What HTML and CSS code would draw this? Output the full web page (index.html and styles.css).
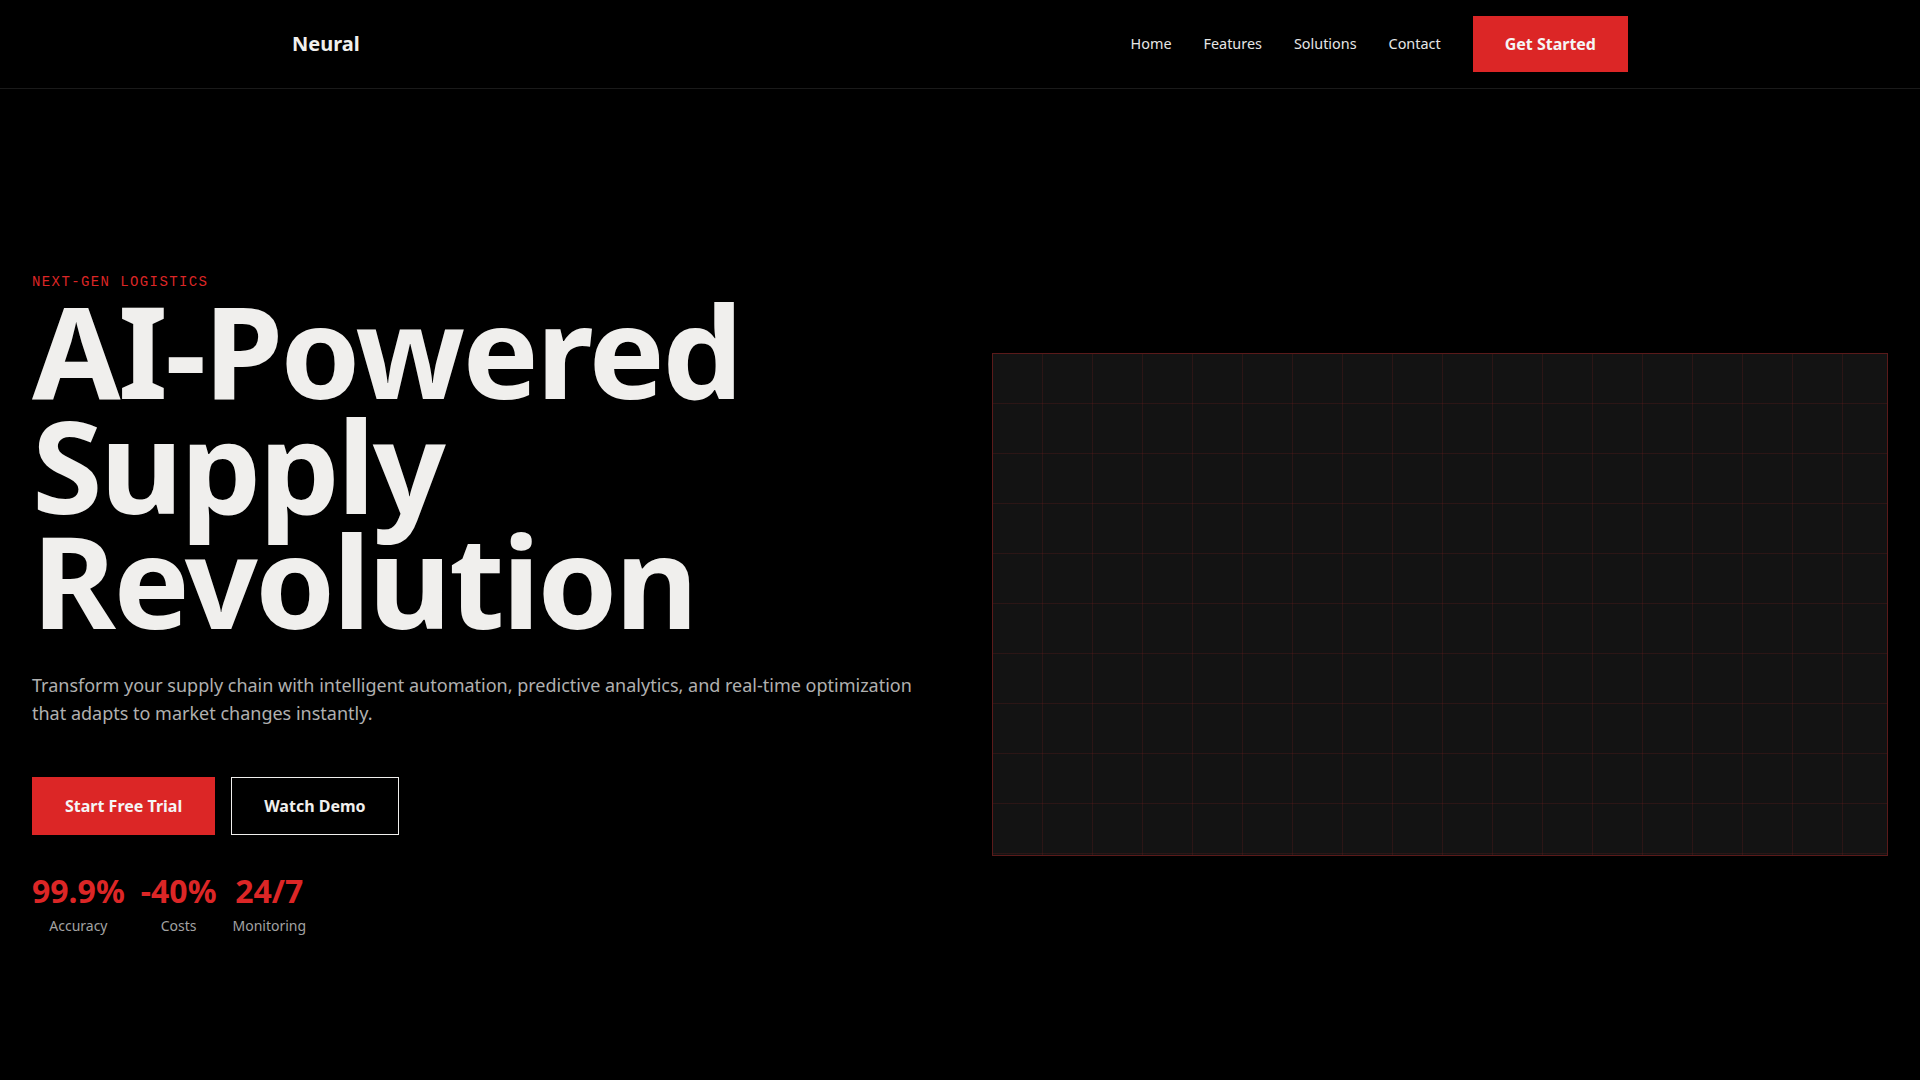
FILE: index.html
```html
<!DOCTYPE html>
<html lang="en">
<head>
<meta charset="utf-8">
<title>Neural</title>
<link rel="stylesheet" href="styles.css">
</head>
<body>
<header class="site-header">
  <div class="header-inner">
    <a class="logo" href="#">Neural</a>
    <nav class="nav">
      <a class="nav-link" href="#">Home</a>
      <a class="nav-link" href="#">Features</a>
      <a class="nav-link" href="#">Solutions</a>
      <a class="nav-link" href="#">Contact</a>
      <a class="btn btn-primary btn-nav" href="#">Get Started</a>
    </nav>
  </div>
</header>
<main class="hero">
  <div class="hero-copy">
    <p class="eyebrow">NEXT-GEN LOGISTICS</p>
    <h1 class="hero-title">AI-Powered<br>Supply<br>Revolution</h1>
    <p class="hero-text">Transform your supply chain with intelligent automation, predictive analytics, and real-time optimization that adapts to market changes instantly.</p>
    <div class="hero-actions">
      <a class="btn btn-primary" href="#">Start Free Trial</a>
      <a class="btn btn-outline" href="#">Watch Demo</a>
    </div>
    <div class="stats">
      <div class="stat"><div class="stat-value">99.9%</div><div class="stat-label">Accuracy</div></div>
      <div class="stat"><div class="stat-value">-40%</div><div class="stat-label">Costs</div></div>
      <div class="stat"><div class="stat-value">24/7</div><div class="stat-label">Monitoring</div></div>
    </div>
  </div>
  <div class="hero-visual">
    <div class="grid-panel"></div>
  </div>
</main>
</body>
</html>
```
FILE: styles.css
```css
* { box-sizing: border-box; }
html, body { margin: 0; padding: 0; }
body {
  background: #000;
  color: #f0efed;
  font-family: "Noto Sans", "Open Sans", sans-serif;
  font-size: 16px;
  line-height: 1.6;
  min-height: 100vh;
}
a { text-decoration: none; color: inherit; }

.site-header {
  border-bottom: 1px solid #1a1a1a;
}
.header-inner {
  max-width: 1400px;
  margin: 0 auto;
  padding: 16px 32px;
  display: flex;
  align-items: center;
  justify-content: space-between;
}
.logo {
  font-size: 20px;
  font-weight: 700;
  color: #f0efed;
}
.nav {
  display: flex;
  align-items: center;
  gap: 32px;
}
.nav-link {
  font-size: 14.4px;
  color: #e6e6e6;
}

.btn {
  display: inline-block;
  font-size: 16px;
  font-weight: 700;
  line-height: 24px;
  padding: 16px 32px;
  border: 1px solid transparent;
}
.btn-primary {
  background: #dc2626;
  border-color: #dc2626;
  color: #f5f5f5;
}
.btn-outline {
  background: transparent;
  border-color: #f0efed;
  color: #f0efed;
}
.btn-nav {
  border: 0;
  line-height: 24px;
}

.hero {
  display: grid;
  grid-template-columns: 1fr 1fr;
  gap: 64px;
  align-items: center;
  padding: 183px 32px 64px;
}
.eyebrow {
  margin: 0;
  font-family: "Liberation Mono", "DejaVu Sans Mono", monospace;
  font-size: 14px;
  line-height: 20px;
  letter-spacing: 0.1em;
  color: #dc2626;
}
.hero-title {
  margin: 0;
  font-size: 128px;
  font-weight: 700;
  line-height: 0.9;
  letter-spacing: -0.02em;
  color: #f0efed;
}
.hero-text {
  margin: 33px 0 0;
  font-size: 18px;
  line-height: 1.6;
  color: #b0b0b0;
}
.hero-actions {
  display: flex;
  gap: 16px;
  margin-top: 49px;
}
.stats {
  display: flex;
  gap: 16px;
  margin-top: 33px;
}
.stat {
  text-align: center;
}
.stat-value {
  font-size: 32px;
  font-weight: 700;
  line-height: 1.45;
  color: #dc2626;
}
.stat-label {
  font-size: 14px;
  line-height: 1.6;
  color: #a3a3a3;
}

.grid-panel {
  height: 503px;
  background-color: #131313;
  border: 1px solid #5a1a1a;
  background-image:
    linear-gradient(to right, rgba(220, 38, 38, 0.12) 1px, transparent 1px),
    linear-gradient(to bottom, rgba(220, 38, 38, 0.12) 1px, transparent 1px);
  background-size: 50px 50px;
  background-position: -1px -1px;
}
```
